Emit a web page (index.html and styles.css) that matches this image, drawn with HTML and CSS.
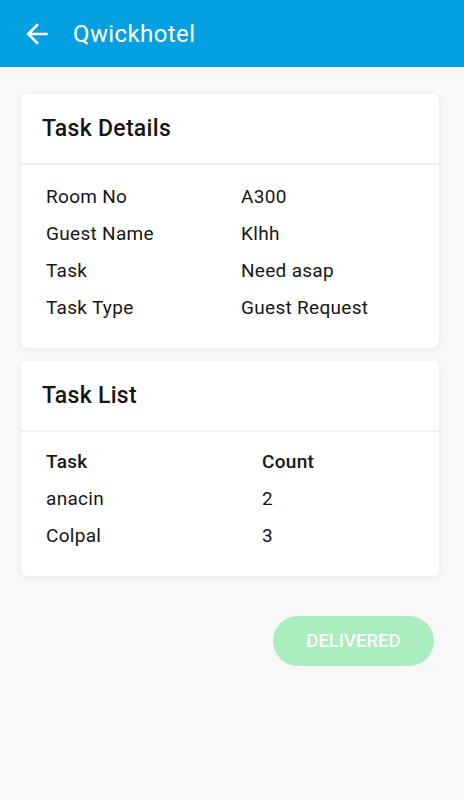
FILE: index.html
```html
<!DOCTYPE html>
<html>
<head>
<meta charset="utf-8">
<link rel="stylesheet" href="styles.css">
</head>
<body>
<header class="appbar">
  <svg class="back" width="32" height="32" viewBox="0 0 24 24"><path d="M20 11H7.83l5.59-5.59L12 4l-8 8 8 8 1.41-1.41L7.83 13H20v-2z" fill="#fff"/></svg>
  <span class="title">Qwickhotel</span>
</header>
<main class="content">
  <section class="card">
    <div class="card-head">Task Details</div>
    <div class="card-body grid details">
      <span>Room No</span><span>A300</span>
      <span>Guest Name</span><span>Klhh</span>
      <span>Task</span><span>Need asap</span>
      <span>Task Type</span><span>Guest Request</span>
    </div>
  </section>
  <section class="card">
    <div class="card-head">Task List</div>
    <div class="card-body grid list">
      <span class="th">Task</span><span class="th">Count</span>
      <span>anacin</span><span>2</span>
      <span>Colpal</span><span>3</span>
    </div>
  </section>
  <div class="actions">
    <button class="btn">DELIVERED</button>
  </div>
</main>
</body>
</html>
```
FILE: styles.css
```css
* { box-sizing: border-box; }
html, body { margin: 0; padding: 0; }
body {
  background: #f8f8f8;
  font-family: Roboto, "Noto Sans", sans-serif;
  color: #1a1a1a;
  width: 464px;
  min-height: 800px;
}
.appbar {
  height: 67px;
  background: #03a0e1;
  display: flex;
  align-items: center;
  padding-left: 21px;
  gap: 20px;
  color: #fff;
}
.back { width: 32px; height: 32px; flex: none; }
.title { font-size: 24px; font-weight: 400; letter-spacing: 0.4px; }
.content { padding: 27px 25px 0 21px; display: flex; flex-direction: column; gap: 13px; }
.card {
  background: #fff;
  border-radius: 6px;
  box-shadow: 0 1px 6px rgba(0,0,0,0.08);
}
.card-head {
  height: 71px;
  padding: 0 21px;
  display: flex;
  align-items: center;
  font-size: 23px;
  font-weight: 500;
  letter-spacing: 0.3px;
  color: #161616;
  border-bottom: 2px solid #f0f0f0;
}
.card-body { padding: 20px 25px 18px; }
.grid { display: grid; row-gap: 13px; font-size: 19px; letter-spacing: 0.3px; line-height: 24px; color: #161616; }
.details { grid-template-columns: 195px 1fr; padding-top: 20px; padding-bottom: 28px; }
.list { grid-template-columns: 216px 1fr; padding-top: 18px; padding-bottom: 28px; }
.th { font-weight: 500; }
.actions { display: flex; justify-content: flex-end; padding-top: 27px; padding-right: 5px; }
.btn {
  width: 161px;
  height: 50px;
  border: none;
  border-radius: 25px;
  background: #aaedbe;
  color: #fff;
  font-family: Roboto, sans-serif;
  font-size: 18.5px;
  font-weight: 500;
}
```
